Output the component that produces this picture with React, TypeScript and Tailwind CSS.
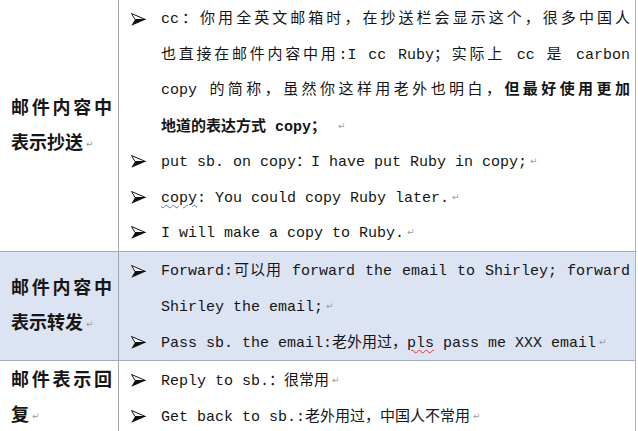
import React from 'react';

// Word-style paragraph mark
const Ret = () => (
    <span className="ml-[3px] align-middle font-['DejaVu_Sans'] text-[9px] font-normal text-[#9a9a9a]">↵</span>
);

// Wingdings-like 3D arrowhead bullet
const Arrow = () => (
    <svg width="15" height="13" viewBox="0 0 15 13">
        <path d="M0.5 0.5 L14.5 6.5 L4 6.5 Z" fill="#fff" stroke="#111" strokeWidth="1" strokeLinejoin="round" />
        <path d="M4 6.5 L14.8 6.5 L0.3 12.8 Z" fill="#111" />
    </svg>
);

const Bullet: React.FC<{ children: React.ReactNode }> = ({ children }) => (
    <div className="flex">
        <div className="flex h-[35.5px] w-[42px] shrink-0 items-center pl-[12px]">
            <Arrow />
        </div>
        <div className="min-w-0 flex-1 pr-[5px]">{children}</div>
    </div>
);

const Line: React.FC<{ children: React.ReactNode; full?: boolean }> = ({ children, full }) => (
    <div className={full ? 'h-[35.5px] whitespace-pre text-justify [text-align-last:justify]' : 'h-[35.5px] whitespace-pre'}>{children}</div>
);

const Label: React.FC<{ text: string }> = ({ text }) => (
    <div className="flex items-center border-r border-[#a3a8b3] pl-[11px] pr-[6px]">
        <div className="w-full text-justify font-['Noto_Sans_CJK_SC',sans-serif] text-[18px] font-bold leading-[35px] text-[#161616]">
            {text}
            <Ret />
        </div>
    </div>
);

export default function App() {
    return (
        <div className="h-[431px] w-[638px] overflow-hidden bg-white font-['Liberation_Mono','Noto_Sans_CJK_SC',monospace] text-[15px] leading-[35.5px] text-[#151515]">
            <div className="w-[636px] border-r border-[#a9b0c0]">
                {/* 抄送 */}
                <div className="grid grid-cols-[119px_1fr] border-b border-[#9fa9c0]">
                    <Label text="邮件内容中表示抄送" />
                    <div className="pt-[2px]">
                        <Bullet>
                            <Line full>cc：你用全英文邮箱时，在抄送栏会显示这个，很多中国人</Line>
                            <Line full>也直接在邮件内容中用:I cc Ruby；实际上 cc 是 carbon</Line>
                            <Line full>
                                copy 的简称，虽然你这样用老外也明白，<b>但最好使用更加</b>
                            </Line>
                            <Line>
                                <b>地道的表达方式 copy；</b> <Ret />
                            </Line>
                        </Bullet>
                        <Bullet>
                            <Line>
                                put sb. on copy：I have put Ruby in copy;<Ret />
                            </Line>
                        </Bullet>
                        <Bullet>
                            <Line>
                                <span className="underline decoration-[#5a6fd0] decoration-wavy decoration-1 underline-offset-[3px]">copy</span>: You could copy Ruby later.<Ret />
                            </Line>
                        </Bullet>
                        <Bullet>
                            <Line>
                                I will make a copy to Ruby.<Ret />
                            </Line>
                        </Bullet>
                    </div>
                </div>

                {/* 转发 */}
                <div className="grid grid-cols-[119px_1fr] border-b border-[#9fa9c0] bg-[#dce3f2]">
                    <Label text="邮件内容中表示转发" />
                    <div className="pt-[2px]">
                        <Bullet>
                            <Line full>Forward:可以用 forward the email to Shirley; forward</Line>
                            <Line>
                                Shirley the email;<Ret />
                            </Line>
                        </Bullet>
                        <Bullet>
                            <Line>
                                Pass sb. the email:老外用过，<span className="underline decoration-[#e03131] decoration-wavy decoration-1 underline-offset-[3px]">pls</span> pass me XXX email<Ret />
                            </Line>
                        </Bullet>
                    </div>
                </div>

                {/* 回复 */}
                <div className="grid grid-cols-[119px_1fr]">
                    <Label text="邮件表示回复" />
                    <div className="pt-[2px]">
                        <Bullet>
                            <Line>
                                Reply to sb.：很常用<Ret />
                            </Line>
                        </Bullet>
                        <Bullet>
                            <Line>
                                Get back to sb.:老外用过，中国人不常用<Ret />
                            </Line>
                        </Bullet>
                    </div>
                </div>
            </div>
        </div>
    );
}
